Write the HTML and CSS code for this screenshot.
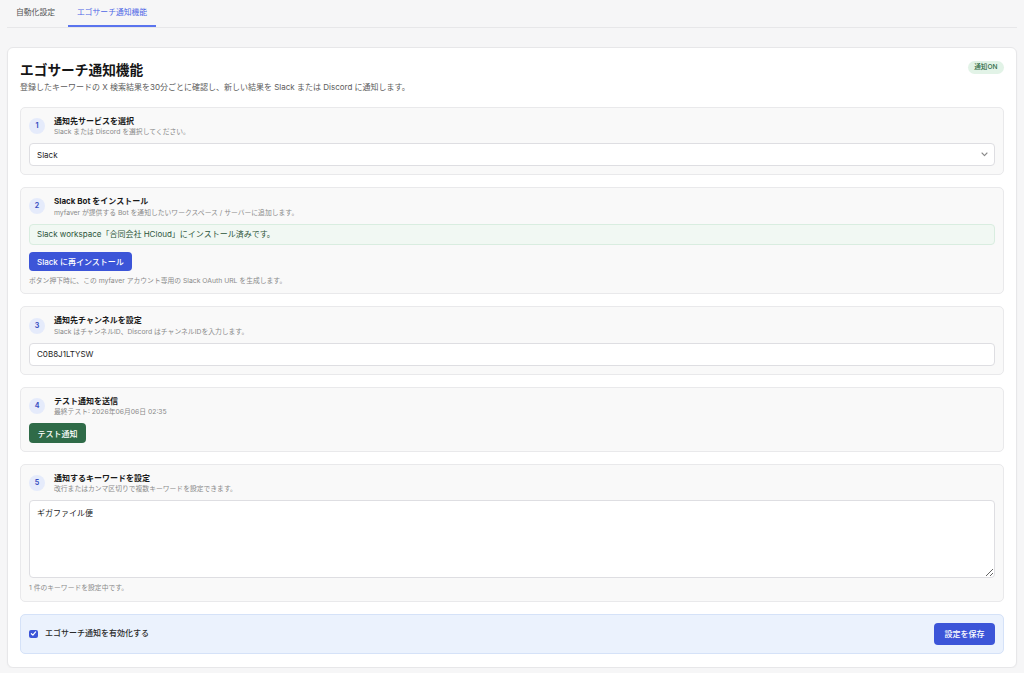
FILE: index.html
```html
<!DOCTYPE html>
<html lang="ja">
<head>
<meta charset="utf-8">
<title>エゴサーチ通知機能</title>
<link rel="stylesheet" href="styles.css">
</head>
<body>
<div class="page">
  <nav class="tabs">
    <a class="tab">自動化設定</a>
    <a class="tab active">エゴサーチ通知機能</a>
  </nav>

  <main class="card">
    <header class="card-head">
      <div>
        <h1 class="title">エゴサーチ通知機能</h1>
        <p class="lead">登録したキーワードの X 検索結果を30分ごとに確認し、新しい結果を Slack または Discord に通知します。</p>
      </div>
      <span class="badge">通知ON</span>
    </header>

    <div class="steps">
      <section class="step">
        <div class="step-head">
          <span class="num">1</span>
          <div>
            <h2 class="step-title">通知先サービスを選択</h2>
            <p class="hint">Slack または Discord を選択してください。</p>
          </div>
        </div>
        <div class="select-wrap">
          <select class="field select"><option>Slack</option><option>Discord</option></select>
          <svg class="chev" width="7" height="5" viewBox="0 0 7 5"><polyline points="1,1 3.5,3.6 6,1" fill="none" stroke="#8a8a8a" stroke-width="1.1" stroke-linecap="round" stroke-linejoin="round"/></svg>
        </div>
      </section>

      <section class="step">
        <div class="step-head">
          <span class="num">2</span>
          <div>
            <h2 class="step-title">Slack Bot をインストール</h2>
            <p class="hint">myfaver が提供する Bot を通知したいワークスペース / サーバーに追加します。</p>
          </div>
        </div>
        <div class="alert">Slack workspace「合同会社 HCloud」にインストール済みです。</div>
        <button class="btn btn-blue btn-install">Slack に再インストール</button>
        <p class="hint hint-after">ボタン押下時に、この myfaver アカウント専用の Slack OAuth URL を生成します。</p>
      </section>

      <section class="step">
        <div class="step-head">
          <span class="num">3</span>
          <div>
            <h2 class="step-title">通知先チャンネルを設定</h2>
            <p class="hint">Slack はチャンネルID、Discord はチャンネルIDを入力します。</p>
          </div>
        </div>
        <input class="field" type="text" value="C0B8J1LTYSW">
      </section>

      <section class="step">
        <div class="step-head">
          <span class="num">4</span>
          <div>
            <h2 class="step-title">テスト通知を送信</h2>
            <p class="hint">最終テスト: 2026年06月06日 02:35</p>
          </div>
        </div>
        <button class="btn btn-green">テスト通知</button>
      </section>

      <section class="step">
        <div class="step-head">
          <span class="num">5</span>
          <div>
            <h2 class="step-title">通知するキーワードを設定</h2>
            <p class="hint">改行またはカンマ区切りで複数キーワードを設定できます。</p>
          </div>
        </div>
        <textarea class="field area">ギガファイル便</textarea>
        <p class="hint hint-after2">1 件のキーワードを設定中です。</p>
      </section>

      <div class="savebar">
        <label class="check">
          <span class="box"><svg width="7" height="7" viewBox="0 0 7 7"><polyline points="1.4,3.7 2.9,5.1 5.6,1.9" fill="none" stroke="#fff" stroke-width="1.2" stroke-linecap="round" stroke-linejoin="round"/></svg></span>
          <span class="check-label">エゴサーチ通知を有効化する</span>
        </label>
        <button class="btn btn-blue btn-save">設定を保存</button>
      </div>
    </div>
  </main>
</div>
</body>
</html>
```

FILE: styles.css
```css
* { box-sizing: border-box; }

html, body {
  margin: 0;
  padding: 0;
  background: #f6f6f7;
  font-family: Inter, "Noto Sans CJK JP", sans-serif;
  color: #1c1c1c;
}

.page {
  padding: 0 7px;
}

.tabs {
  display: flex;
  gap: 4px;
  height: 28px;
  border-bottom: 1px solid #e7e7e9;
  margin-bottom: 18.5px;
}

.tab {
  display: block;
  padding: 7px 9px 0;
  height: 27px;
  font-size: 7.8px;
  line-height: 11.5px;
  color: #555;
  border-bottom: 2px solid transparent;
}

.tab.active {
  color: #4f67e6;
  border-bottom-color: #5a74ee;
}

.card {
  background: #fff;
  border: 1px solid #e7e7e9;
  border-radius: 6px;
  padding: 13px 12px 13px;
  box-shadow: 0 1px 2px rgba(0, 0, 0, 0.03);
}

.card-head {
  display: flex;
  justify-content: space-between;
  align-items: flex-start;
  margin-bottom: 14px;
}

.title {
  margin: 0;
  font-size: 13.7px;
  line-height: 18px;
  font-weight: 700;
  color: #161616;
}

.lead {
  margin: 3px 0 0;
  font-size: 8px;
  line-height: 11.4px;
  color: #5c5c5c;
}

.badge {
  display: block;
  height: 13px;
  padding: 0 6.5px;
  border-radius: 7px;
  background: #e2f3e7;
  color: #2f6a45;
  font-size: 6.6px;
  line-height: 13px;
  font-weight: 500;
}

.steps {
  display: flex;
  flex-direction: column;
  gap: 12px;
}

.step {
  background: #f9f9f9;
  border: 1px solid #e9e9eb;
  border-radius: 5px;
  padding: 8px;
  display: flex;
  flex-direction: column;
  align-items: stretch;
}

.step-head {
  display: flex;
  align-items: center;
  gap: 9px;
  margin-bottom: 6.8px;
}

.num {
  flex: none;
  width: 16px;
  height: 16px;
  border-radius: 50%;
  background: #e5ebfb;
  color: #3a4fc2;
  font-size: 7px;
  font-weight: 700;
  line-height: 16px;
  text-align: center;
}

.step-title {
  margin: 0;
  font-size: 8px;
  line-height: 11.4px;
  font-weight: 700;
  color: #1a1a1a;
}

.hint {
  margin: 0;
  font-size: 6.8px;
  line-height: 9.1px;
  color: #8a8a8a;
}

.hint-after {
  margin-top: 5px;
}

.hint-after2 {
  margin-top: 5.5px;
}

.field {
  display: block;
  width: 100%;
  height: 23px;
  margin: 0;
  padding: 0 7px;
  border: 1px solid #dedee2;
  border-radius: 4px;
  background: #fff;
  font-family: Inter, "Noto Sans CJK JP", sans-serif;
  font-size: 8px;
  color: #222;
  outline: none;
}

.select-wrap {
  position: relative;
}

.select {
  appearance: none;
  -webkit-appearance: none;
}

.chev {
  position: absolute;
  right: 7px;
  top: 9px;
  pointer-events: none;
}

.area {
  height: 77.6px;
  padding: 6.5px 7px;
  line-height: 11.4px;
  resize: vertical;
}

.alert {
  height: 21px;
  padding: 0 7px;
  margin-bottom: 7.4px;
  background: #f1f8f3;
  border: 1px solid #d9ede0;
  border-radius: 4px;
  font-size: 8px;
  line-height: 19px;
  color: #2c553a;
}

.btn {
  display: block;
  align-self: flex-start;
  border: none;
  border-radius: 4px;
  margin: 0;
  font-family: Inter, "Noto Sans CJK JP", sans-serif;
  font-size: 8px;
  font-weight: 500;
  color: #fff;
  cursor: pointer;
}

.btn-blue {
  background: #3c55d8;
}

.btn-install {
  height: 19.5px;
  padding: 0 8px;
}

.btn-green {
  background: #2f6b48;
  height: 20px;
  padding: 0 8.6px;
}

.btn-save {
  height: 22.7px;
  padding: 0 10.5px;
  align-self: center;
}

.savebar {
  display: flex;
  justify-content: space-between;
  align-items: center;
  background: #ebf2fd;
  border: 1px solid #d5e2f8;
  border-radius: 5px;
  padding: 8px;
}

.check {
  display: flex;
  align-items: center;
  gap: 7.5px;
}

.box {
  width: 8.5px;
  height: 8.5px;
  border-radius: 2px;
  background: #3c55d8;
  display: flex;
  align-items: center;
  justify-content: center;
}

.box svg {
  display: block;
}

.check-label {
  font-size: 8px;
  line-height: 11.4px;
  color: #2a2a2a;
  font-weight: 500;
}
```
